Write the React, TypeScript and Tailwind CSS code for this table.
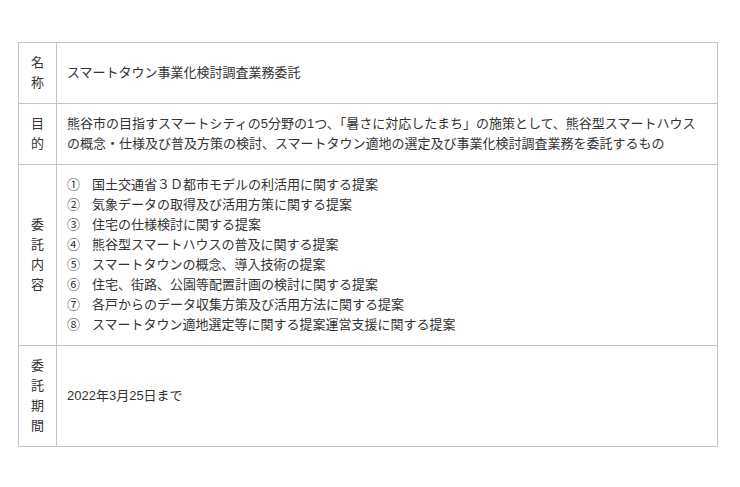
import React from "react";

const items = [
  ["①", "国土交通省３Ｄ都市モデルの利活用に関する提案"],
  ["②", "気象データの取得及び活用方策に関する提案"],
  ["③", "住宅の仕様検討に関する提案"],
  ["④", "熊谷型スマートハウスの普及に関する提案"],
  ["⑤", "スマートタウンの概念、導入技術の提案"],
  ["⑥", "住宅、街路、公園等配置計画の検討に関する提案"],
  ["⑦", "各戸からのデータ収集方策及び活用方法に関する提案"],
  ["⑧", "スマートタウン適地選定等に関する提案運営支援に関する提案"],
];

function Label({ chars }: { chars: string[] }) {
  return (
    <td className="w-[38px] border border-[#c4c4c4] py-[10px] text-center align-middle">
      {chars.map((c, i) => (
        <div key={i} className="leading-[20px]">
          {c}
        </div>
      ))}
    </td>
  );
}

export default function App() {
  return (
    <div
      className="w-[740px] h-[487px] bg-white pt-[42px] pl-[18px] text-[13px] leading-[20px] text-[#333333]"
      style={{ fontFamily: '"Liberation Sans", "Noto Sans CJK JP", sans-serif' }}
    >
      <table className="w-[700px] border-collapse border border-[#c4c4c4]">
        <tbody>
          <tr>
            <Label chars={["名", "称"]} />
            <td className="border border-[#c4c4c4] pl-[10px] pr-[10px] py-[10px] align-middle">
              スマートタウン事業化検討調査業務委託
            </td>
          </tr>
          <tr>
            <Label chars={["目", "的"]} />
            <td className="border border-[#c4c4c4] pl-[10px] pr-[10px] py-[10px] align-middle">
              熊谷市の目指すスマートシティの5分野の1つ、「暑さに対応したまち」の施策として、熊谷型スマートハウスの概念・仕様及び普及方策の検討、スマートタウン適地の選定及び事業化検討調査業務を委託するもの
            </td>
          </tr>
          <tr>
            <Label chars={["委", "託", "内", "容"]} />
            <td className="border border-[#c4c4c4] pl-[10px] pr-[10px] py-[10px] align-middle">
              {items.map(([n, t]) => (
                <div key={n} className="flex leading-[20px]">
                  <span className="w-[25px] shrink-0">{n}</span>
                  <span>{t}</span>
                </div>
              ))}
            </td>
          </tr>
          <tr>
            <Label chars={["委", "託", "期", "間"]} />
            <td className="border border-[#c4c4c4] pl-[10px] pr-[10px] py-[10px] align-middle">
              2022年3月25日まで
            </td>
          </tr>
        </tbody>
      </table>
    </div>
  );
}
